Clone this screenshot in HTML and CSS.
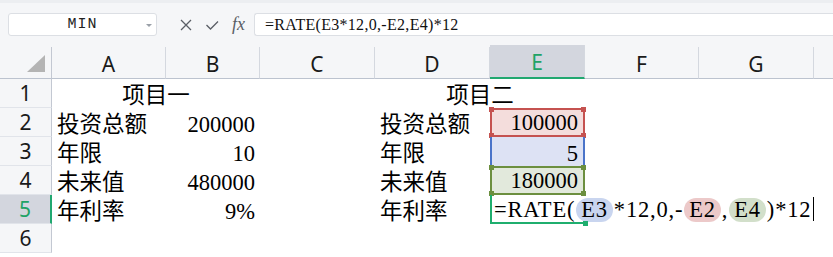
FILE: index.html
```html
<!DOCTYPE html>
<html lang="zh-CN">
  <head>
    <meta charset="UTF-8" />
    <title>RATE</title>
    <link rel="stylesheet" href="styles.css">
  </head>
  <body>
    <div class="toolbar">
      <div class="name-box">
        <span class="name">MIN</span>
        <span class="drop"></span>
      </div>
      <div class="tools">
        <svg class="tool" width="14" height="14" viewBox="0 0 14 14">
          <path d="M2 2 L12 12 M12 2 L2 12" stroke="#5a5e66" stroke-width="1.3" fill="none" />
        </svg>
        <svg class="tool" width="14" height="14" viewBox="0 0 14 14">
          <path d="M1.5 7 L5.5 11 L13 3.5" stroke="#5a5e66" stroke-width="1.3" fill="none" />
        </svg>
        <span class="fx">fx</span>
      </div>
      <div class="formula">=RATE(E3*12,0,-E2,E4)*12</div>
    </div>

    <div class="sheet">
      <div class="corner"><span class="tri"></span></div>
      <div class="col">A</div>
      <div class="col">B</div>
      <div class="col">C</div>
      <div class="col">D</div>
      <div class="col col-active">E</div>
      <div class="col">F</div>
      <div class="col">G</div>
      <div class="col col-last"></div>

      <div class="rh">1</div>
      <div class="cell span2 center">项目一</div>
      <div class="cell"></div>
      <div class="cell span2 center">项目二</div>
      <div class="cell"></div>
      <div class="cell"></div>
      <div class="cell"></div>

      <div class="rh">2</div>
      <div class="cell">投资总额</div>
      <div class="cell num">200000</div>
      <div class="cell"></div>
      <div class="cell">投资总额</div>
      <div class="cell num ref ref-red">
        100000
        <span class="knob tl"></span><span class="knob tr"></span>
        <span class="knob bl"></span><span class="knob br"></span>
      </div>
      <div class="cell"></div>
      <div class="cell"></div>
      <div class="cell"></div>

      <div class="rh">3</div>
      <div class="cell">年限</div>
      <div class="cell num">10</div>
      <div class="cell"></div>
      <div class="cell">年限</div>
      <div class="cell num ref-blue">5</div>
      <div class="cell"></div>
      <div class="cell"></div>
      <div class="cell"></div>

      <div class="rh">4</div>
      <div class="cell">未来值</div>
      <div class="cell num">480000</div>
      <div class="cell"></div>
      <div class="cell">未来值</div>
      <div class="cell num ref ref-green">
        180000
        <span class="knob tl"></span><span class="knob tr"></span>
        <span class="knob bl"></span><span class="knob br"></span>
      </div>
      <div class="cell"></div>
      <div class="cell"></div>
      <div class="cell"></div>

      <div class="rh rh-active">5</div>
      <div class="cell">年利率</div>
      <div class="cell num">9%</div>
      <div class="cell"></div>
      <div class="cell">年利率</div>
      <div class="cell editing">
        <span class="edit-text">=RATE(<span class="pill pill-blue">E3</span>*12,0,-<span class="pill pill-red">E2</span>,<span class="pill pill-green">E4</span>)*12</span><span class="caret"></span>
        <span class="handle"></span>
      </div>
      <div class="cell"></div>
      <div class="cell"></div>
      <div class="cell"></div>

      <div class="rh">6</div>
      <div class="cell"></div>
      <div class="cell"></div>
      <div class="cell"></div>
      <div class="cell"></div>
      <div class="cell"></div>
      <div class="cell"></div>
      <div class="cell"></div>
      <div class="cell"></div>
    </div>
  </body>
</html>
```

FILE: styles.css
```css
body {
  margin: 0;
  background: #ffffff;
  overflow: hidden;
  font-family: "Liberation Serif", "Noto Sans CJK SC", serif;
}

/* formula bar */
.toolbar {
  height: 47px;
  box-sizing: border-box;
  background: #f5f6f8;
  border-top: 3px solid #eceef1;
  padding-top: 10px;
  display: flex;
  align-items: flex-start;
}
.name-box {
  width: 149px;
  height: 23px;
  margin-left: 8px;
  box-sizing: border-box;
  background: #ffffff;
  border: 1px solid #dcdfe4;
  border-radius: 3px;
  display: flex;
  align-items: center;
  justify-content: center;
  position: relative;
}
.name {
  font-family: "Liberation Mono", monospace;
  font-size: 15px;
  color: #222222;
  letter-spacing: 1px;
}
.drop {
  position: absolute;
  right: 4px;
  top: 10px;
  border-left: 3px solid transparent;
  border-right: 3px solid transparent;
  border-top: 3px solid #9aa0a8;
}
.tools {
  width: 97px;
  height: 23px;
  display: flex;
  align-items: center;
  padding-left: 22px;
  box-sizing: border-box;
  gap: 12px;
}
.fx {
  font-family: "Liberation Serif", serif;
  font-style: italic;
  font-size: 18px;
  color: #5a5e66;
  margin-left: 1px;
}
.formula {
  flex: 1;
  height: 23px;
  box-sizing: border-box;
  background: #ffffff;
  border: 1px solid #dcdfe4;
  border-right: none;
  border-radius: 3px 0 0 3px;
  padding-left: 10px;
  font-size: 16px;
  line-height: 21px;
  letter-spacing: 0.3px;
  color: #111111;
}

/* grid */
.sheet {
  display: grid;
  grid-template-columns: 52px 114px 94px 115px 115px 95px 114px 115px 1fr;
  grid-template-rows: 32px repeat(6, 29px);
}
.corner {
  background: #f5f6f8;
  border-right: 1px solid #c3c8d2;
  border-bottom: 1px solid #bcc3cf;
  position: relative;
}
.tri {
  position: absolute;
  right: 6px;
  bottom: 6px;
  border-left: 18px solid transparent;
  border-bottom: 17px solid #b4b4b4;
}
.col {
  background: #f5f6f8;
  border-right: 1px solid #d4d8df;
  border-bottom: 1px solid #bcc3cf;
  display: flex;
  align-items: center;
  justify-content: center;
  font-family: "Noto Sans", sans-serif;
  font-size: 21px;
  color: #1a1a1a;
  padding-top: 2px;
}
.col-last {
  border-right: none;
}
.col-active {
  background: #d3d6de;
  color: #21a366;
  border-bottom: 2px solid #21a870;
  margin-top: -2px;
}
.rh {
  background: #f5f6f8;
  border-right: 1px solid #c3c8d2;
  border-bottom: 1px solid #e1e4ea;
  display: flex;
  align-items: center;
  justify-content: center;
  font-family: "Noto Sans", sans-serif;
  font-size: 21px;
  color: #1a1a1a;
}
.rh-active {
  background: #d3d6de;
  color: #21a366;
  border-right: 2px solid #21a870;
}

/* cells */
.cell {
  font-size: 22.5px;
  line-height: 25px;
  color: #000000;
  padding: 0 5px;
  display: flex;
  align-items: flex-end;
  white-space: nowrap;
  position: relative;
}
.cell > * {
  flex-shrink: 0;
}
.span2 {
  grid-column: span 2;
}
.center {
  justify-content: center;
}
.num {
  justify-content: flex-end;
}
.ref {
  border: 2px solid;
}
.ref-red {
  background: #f4dddc;
  border-color: #c55250;
}
.ref-blue {
  background: #dde2f4;
  border-left: 2px solid #4a74c9;
  border-right: 2px solid #4a74c9;
}
.ref-green {
  background: #e2e9dc;
  border-color: #6c8f3f;
}
.knob {
  position: absolute;
  width: 5px;
  height: 5px;
}
.ref-red .knob {
  background: #c55250;
}
.ref-green .knob {
  background: #6c8f3f;
}
.tl { left: -3px; top: -3px; }
.tr { right: -3px; top: -3px; }
.bl { left: -3px; bottom: -3px; }
.br { right: -3px; bottom: -3px; }

.editing {
  border-left: 2px solid #1fae6e;
  border-bottom: 2px solid #1fae6e;
  padding-left: 2px;
  overflow: visible;
  z-index: 2;
}
.edit-text {
  letter-spacing: 0.8px;
}
.pill {
  display: inline-block;
  padding: 0 5px;
  margin: 0 1px;
  border-radius: 12px;
  line-height: 24px;
}
.pill-blue {
  background: #c9d5ef;
}
.pill-red {
  background: #ecc9c9;
}
.pill-green {
  background: #d2dfca;
}
.caret {
  display: inline-block;
  width: 1px;
  height: 24px;
  background: #000000;
  margin-left: 2px;
  margin-bottom: 1px;
}
.handle {
  position: absolute;
  left: 91px;
  bottom: -4px;
  width: 5px;
  height: 5px;
  background: #1fae6e;
}
```
